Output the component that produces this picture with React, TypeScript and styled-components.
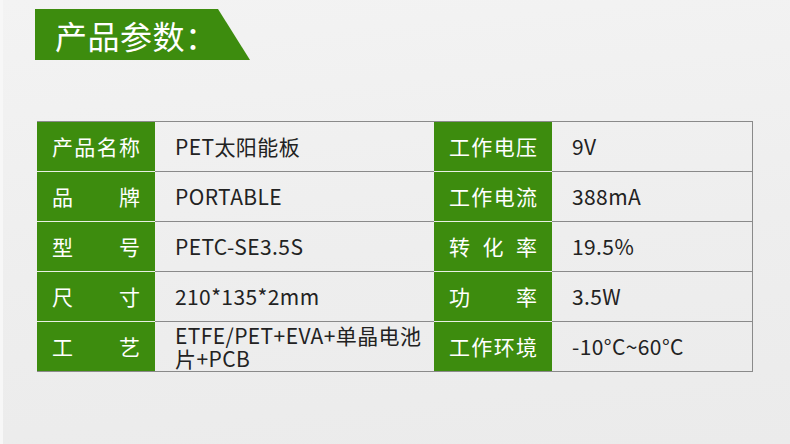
import styled, { createGlobalStyle } from "styled-components";

const GlobalStyle = createGlobalStyle`
 html, body {
  margin: 0;
  padding: 0;
 }
 body {
  font-family: "Noto Sans CJK SC", "Noto Sans", sans-serif;
 }
`;

interface ISpec {
 label: string;
 value: string;
}

const rows: [ISpec, ISpec][] = [
 [
  { label: "产品名称", value: "PET太阳能板" },
  { label: "工作电压", value: "9V" },
 ],
 [
  { label: "品牌", value: "PORTABLE" },
  { label: "工作电流", value: "388mA" },
 ],
 [
  { label: "型号", value: "PETC-SE3.5S" },
  { label: "转化率", value: "19.5%" },
 ],
 [
  { label: "尺寸", value: "210*135*2mm" },
  { label: "功率", value: "3.5W" },
 ],
 [
  { label: "工艺", value: "ETFE/PET+EVA+单晶电池片+PCB" },
  { label: "工作环境", value: "-10°C~60°C" },
 ],
];

const App = () => {
 return (
  <Page>
   <GlobalStyle />
   <Banner>产品参数：</Banner>
   <SpecTable>
    {rows.map((pair, i) => {
     const last = i === rows.length - 1;
     return pair.map((spec) => [
      <LabelCell key={spec.label} $last={last}>
       {spec.label}
      </LabelCell>,
      <ValueCell key={spec.label + "-v"}>{spec.value}</ValueCell>,
     ]);
    })}
   </SpecTable>
  </Page>
 );
};

export default App;

const Page = styled.div`
 width: 790px;
 height: 444px;
 box-sizing: border-box;
 padding: 9px 0 0 35px;
 background: linear-gradient(175deg, #f3f3f3 0%, #eeeeee 55%, #ebebeb 100%);
 box-shadow: inset 3px 0 0 #f7f7f7;
 overflow: hidden;
`;

const Banner = styled.div`
 width: 215px;
 height: 51px;
 box-sizing: border-box;
 padding-left: 20px;
 display: flex;
 align-items: center;
 background: #3d8c0e;
 clip-path: polygon(0 0, 183px 0, 100% 100%, 0 100%);
 color: #ffffff;
 font-size: 32px;
 line-height: 1;
 letter-spacing: 0.5px;
`;

const SpecTable = styled.div`
 margin: 61px 0 0 2px;
 width: 716px;
 box-sizing: border-box;
 display: grid;
 grid-template-columns: 118px 279px 118px 200px;
 grid-auto-rows: 50px;
 border-top: 1px solid #8a8a8a;
 border-right: 1px solid #8a8a8a;
`;

const LabelCell = styled.div<{ $last: boolean }>`
 box-sizing: border-box;
 padding: 0 15px;
 background: #3d8c0e;
 color: #ffffff;
 font-size: 21px;
 line-height: 49px;
 text-align: justify;
 text-align-last: justify;
 text-justify: inter-character;
 border-bottom: 1px solid ${({ $last }) => ($last ? "#8a8a8a" : "#e8f0e2")};
`;

const ValueCell = styled.div`
 box-sizing: border-box;
 padding: 0 4px 0 20px;
 display: flex;
 align-items: center;
 color: #222222;
 font-size: 21px;
 line-height: 23px;
 letter-spacing: 0.4px;
 border-bottom: 1px solid #8a8a8a;
`;
